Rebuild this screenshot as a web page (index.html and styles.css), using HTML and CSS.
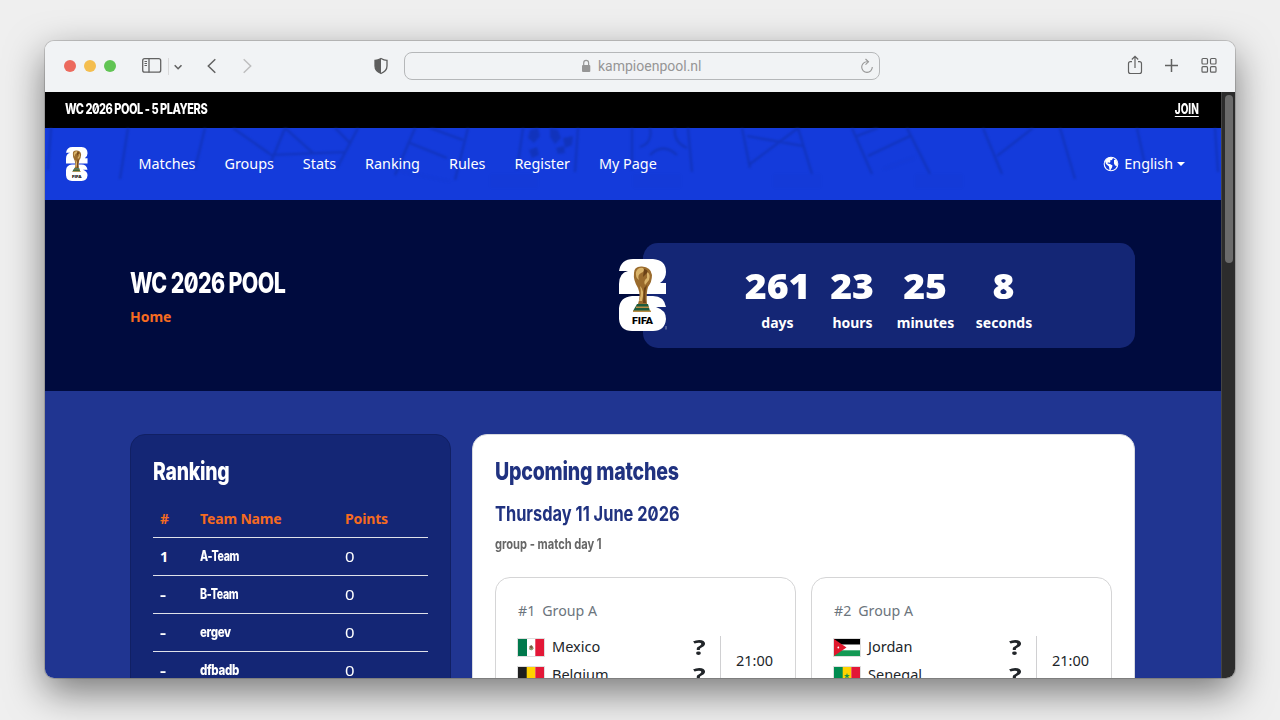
FILE: index.html
```html
<!DOCTYPE html>
<html lang="en">
<head>
<meta charset="utf-8">
<title>WC 2026 Pool</title>
<link rel="stylesheet" href="styles.css">
</head>
<body>
<svg class="defs" aria-hidden="true">
  <symbol id="cup" viewBox="0 0 48 72">
    <path fill="#fff" d="M0 12Q2 0 14 0H34Q47 1 47 13Q47 20 41 24L47 24V35H0V25Q0 14 9 12Z"/>
    <path fill="#fff" d="M13 37H34Q45 37 47 48H37Q47 51 47 60Q46 72 34 72H13Q1 72 0 60V49Q1 38 13 37Z"/>
    <path fill="#9a6b2d" d="M15 14Q15 7 23 7.500Q32 8 33 16Q33 23 29 28Q27 34 28 45H19Q22 36 19 29Q14 21 15 14Z"/>
    <path fill="#d9b36a" d="M17 13Q19 8 24 9Q27 12 22 14Q18 16 20 21Q16 18 17 13ZM28 13Q32 15 30 21L26 26Q24 22 28 19ZM21 27Q26 31 23 42H20Q23 35 21 27Z"/>
    <path fill="#6b4217" d="M25 10Q30 11 28 14L24 18ZM25 29L28 26Q25 35 27 44H24Z"/>
    <path fill="#1b5a3c" d="M18 45H29L31 52H14Z"/>
    <path fill="#b98c42" d="M17 47.500H30V49H17ZM14 51.500H32V53H14Z"/>
  </symbol>
</svg>
<div class="window">
  <div class="toolbar">
    <div class="lights"><i class="red"></i><i class="yellow"></i><i class="green"></i></div>
    <svg class="nav-icons" width="130" height="24" viewBox="0 0 130 24" fill="none" stroke="#626262" stroke-width="1.300">
      <rect x="4.700" y="4.700" width="18" height="13.500" rx="2"/><path d="M11 4.500v14"/><path stroke-width="1" d="M6.500 7.500h2.500M6.500 9.500h2.500M6.500 11.500h2.500"/>
      <path stroke="#d9d9da" stroke-width="1" d="M30.500 4v17"/>
      <path stroke-width="1.600" d="M36.700 11.300l3.400 3.400 3.400-3.400"/>
      <path stroke-width="1.500" d="M77.300 5.200l-7 6.800 7 6.800"/><path stroke="#bebebf" stroke-width="1.500" d="M105.700 5.200l7 6.800-7 6.800"/>
    </svg>
    <svg class="shield" width="16" height="18" viewBox="0 0 16 18"><path fill="none" stroke="#5e5e5e" stroke-width="1.300" d="M8 1.500Q11 3.300 14 3.300V9Q14 14 8 16.500Q2 14 2 9V3.300Q5 3.300 8 1.500Z"/><path fill="#5e5e5e" d="M8 1.500V16.500Q2 14 2 9V3.300Q5 3.300 8 1.500Z"/></svg>
    <div class="address">
      <svg class="lock" width="10" height="14" viewBox="0 0 10 14"><rect x="1" y="6" width="8.300" height="7" rx="1" fill="#969696"/><path d="M2.700 6V4Q2.700 1.300 5.150 1.300T7.600 4V6" fill="none" stroke="#969696" stroke-width="1.200"/></svg>
      <span class="url">kampioenpool.nl</span>
      <svg class="reload" width="14" height="16" viewBox="0 0 14 16" fill="none" stroke="#969696" stroke-width="1.100"><path d="M8.200 3.800H7A5.300 5.300 0 1 0 12.300 9.100"/><path d="M5.500 1l3 2.800-3 2.900"/></svg>
    </div>
    <svg class="actions" width="92" height="24" viewBox="0 0 92 24" fill="none" stroke="#626262" stroke-width="1.200">
      <path d="M5 7.700H3.500Q1.500 7.700 1.500 9.700V17.500Q1.500 19.500 3.500 19.500H12.500Q14.500 19.500 14.500 17.500V9.700Q14.500 7.700 12.500 7.700H11M8 14V2.500M4.800 5.500L8 2.300l3.200 3.200"/>
      <path stroke-width="1.500" d="M38 11.500H51M44.500 5V18"/>
      <rect x="75" y="4.500" width="5.500" height="5.500" rx="1"/><rect x="83.500" y="4.500" width="5.500" height="5.500" rx="1"/><rect x="75" y="12.700" width="5.500" height="5.500" rx="1"/><rect x="83.500" y="12.700" width="5.500" height="5.500" rx="1"/>
    </svg>
  </div>
  <div class="viewport">
    <div class="page">
      <div class="topbar"><span class="display pool-name">WC 2026 POOL - 5 PLAYERS</span><a class="display join">JOIN</a></div>
      <nav class="nav">
        <svg class="pattern" width="1176" height="72" viewBox="45 128 1176 72" fill="none">
          <path d="M51 128L48 170M128 128L120 179M205 128L195 169M233 128L270 154M285 128L271 162M285 128L313 153M270 155L345 152M335 128L351 144M358 128L337 168M415 128L395 175M410 143L447 158M430 128L463 140M468 128L455 180M523 128L517 170M578 128L575 172M632 128V170M688 128L692 172M650 128Q653 143 640 147M675 128Q673 142 687 148M650 155Q663 142 677 155M742 128L750 168M747 136L803 146M798 128L750 164M798 128L812 174M852 128L872 174M907 128L930 174M857 136L878 128M868 156L910 136M983 128L1002 174M1060 128L1075 179M1033 128L997 156M1137 128L1147 174M1215 128L1218 172"/>
          <path class="blots" d="M530 130l8-2 2 8-6 7-6-5ZM550 128l8 2 3 8-6 6-5-7ZM563 138l10-2-1 9-7 3ZM529 150l8-3 2 8-7 3ZM556 148l8-2 1 7-7 1Z"/>
          <path class="blots faint" d="M490 174h48v14h-48ZM633 174h48v14h-48ZM773 174h48v14h-48ZM915 174h48v14h-48ZM395 168L450 180V183L395 172ZM883 167L915 155V160L883 171Z"/>
        </svg>
        <svg class="nav-logo" width="22" height="34" viewBox="0 0 48 72" preserveAspectRatio="none"><use href="#cup"/><text x="13" y="65" class="cup-text" textLength="21" lengthAdjust="spacingAndGlyphs">FIFA</text></svg>
        <div class="links"><a>Matches</a><a>Groups</a><a>Stats</a><a>Ranking</a><a>Rules</a><a>Register</a><a>My Page</a></div>
        <div class="lang">
          <svg width="16" height="16" viewBox="0 0 16 16"><circle cx="8" cy="8" r="6.800" fill="none" stroke="#fff" stroke-width="1.100"/><path fill="#fff" d="M2 5Q4 1.500 8 1.200L10 2 9 4 7 4.500 7.500 6 6 7 5 6 4.500 7.500 7 8 9.500 9.500 9 11.500 7.500 14 6.500 14 6 10.500 3 8ZM11 4l2-.500L14.500 7 14 10 12 9.500 11 7.500Z"/></svg>
          <span>English</span><i class="caret"></i>
        </div>
      </nav>
      <header class="hero">
        <div class="hero-title"><h1 class="display">WC 2026 POOL</h1><a class="home">Home</a></div>
        <div class="countdown">
          <svg class="big-logo" width="48" height="72" viewBox="0 0 48 72"><use href="#cup"/><text x="13" y="65" class="cup-text" textLength="21" lengthAdjust="spacingAndGlyphs">FIFA</text><path d="M47 67v3.500" stroke="#8d95bd" stroke-width="1"/></svg>
          <div class="unit days"><b>261</b><span>days</span></div>
          <div class="unit hours"><b>23</b><span>hours</span></div>
          <div class="unit minutes"><b>25</b><span>minutes</span></div>
          <div class="unit seconds"><b>8</b><span>seconds</span></div>
        </div>
      </header>
      <main class="content">
        <section class="ranking">
          <h2 class="display">Ranking</h2>
          <div class="row head"><span>#</span><span>Team Name</span><span>Points</span></div>
          <div class="row"><b>1</b><span class="display team">A-Team</span><span class="points">0</span></div>
          <div class="row"><b class="dash">-</b><span class="display team">B-Team</span><span class="points">0</span></div>
          <div class="row"><b class="dash">-</b><span class="display team lower">ergev</span><span class="points">0</span></div>
          <div class="row"><b class="dash">-</b><span class="display team lower">dfbadb</span><span class="points">0</span></div>
        </section>
        <section class="upcoming">
          <h2 class="display">Upcoming matches</h2>
          <h3 class="display">Thursday 11 June 2026</h3>
          <p class="display">group - match day 1</p>
          <div class="matches">
            <article class="match">
              <div class="group"><span>#1</span><span>Group A</span></div>
              <div class="fixture">
                <div class="teams">
                  <div class="side"><svg class="flag" width="26" height="17" viewBox="0 0 26 17"><path fill="#fff" d="M0 0h26v17H0z"/><path fill="#00794c" d="M0 0h9v17H0z"/><path fill="#e31837" d="M17.300 0H26v17h-8.700z"/><circle cx="13.200" cy="8.700" r="2.200" fill="#b9a183"/><path d="M11.500 7.500l2-1.500 1.500 3-2 1z" fill="#775c43"/><path d="M11 9.500q2 3 4.500 0" stroke="#73a06e" fill="none"/></svg><span>Mexico</span><b>?</b></div>
                  <div class="side"><svg class="flag" width="26" height="17" viewBox="0 0 26 17"><path fill="#1e1e1e" d="M0 0h9v17H0z"/><path fill="#ffd200" d="M8.700 0h8.600v17H8.700z"/><path fill="#e31837" d="M17.300 0H26v17h-8.700z"/></svg><span>Belgium</span><b>?</b></div>
                </div>
                <div class="time">21:00</div>
              </div>
            </article>
            <article class="match">
              <div class="group"><span>#2</span><span>Group A</span></div>
              <div class="fixture">
                <div class="teams">
                  <div class="side"><svg class="flag" width="26" height="17" viewBox="0 0 26 17"><path fill="#fff" d="M0 0h26v17H0z"/><path d="M0 0h26v5.500H0z"/><path fill="#149954" d="M0 11.300h26V17H0z"/><path fill="#e0182d" d="M0 0l12.500 8.500L0 17z"/><circle cx="4.300" cy="8.500" r=".9" fill="#fff"/></svg><span>Jordan</span><b>?</b></div>
                  <div class="side"><svg class="flag" width="26" height="17" viewBox="0 0 26 17"><path fill="#008c50" d="M0 0h9v17H0z"/><path fill="#ffd200" d="M8.700 0h8.600v17H8.700z"/><path fill="#e31837" d="M17.300 0H26v17h-8.700z"/><path fill="#17904d" d="M13 6l.7 2H16l-1.800 1.300.7 2.200-1.900-1.300-1.900 1.300.7-2.200L10 8h2.300z"/></svg><span>Senegal</span><b>?</b></div>
                </div>
                <div class="time">21:00</div>
              </div>
            </article>
          </div>
        </section>
      </main>
    </div>
    <div class="scrollbar"><div class="thumb"></div></div>
  </div>
</div>
</body>
</html>
```
FILE: styles.css
```css
* { box-sizing: border-box; }
body { margin: 0; height: 720px; overflow: hidden; background: #efefef; padding: 41px 45px 42px; font: 14.500px/20px "Noto Sans", sans-serif; color: #fff; }
h1, h2, h3, p { margin: 0; }
svg { display: block; flex: none; }
.defs { position: absolute; width: 0; height: 0; }
.window { width: 1190px; height: 637px; border-radius: 9px; overflow: hidden; display: flex; flex-direction: column; box-shadow: 0 0 0 1px rgba(0,0,0,.15), 0 14px 38px rgba(0,0,0,.5); }
.toolbar { height: 51px; flex: none; background: #f1f3f5; display: flex; align-items: center; padding: 0 16px 2px 19px; }
.lights { display: flex; gap: 8px; margin-top: 1px; }
.lights i { width: 12px; height: 12px; border-radius: 50%; }
.red { background: #ec6a5e; } .yellow { background: #f4be4f; } .green { background: #61c454; }
.nav-icons { margin-left: 22px; }
.shield { margin-left: 105px; margin-top: 1px; }
.address { margin-left: 15px; width: 476px; height: 28px; border: 1px solid #b5b7b9; border-radius: 8px; display: flex; align-items: center; padding: 0 5px 0 176px; color: #969696; }
.url { margin-left: 7px; font: 14px/20px Roboto, sans-serif; }
.reload { margin-left: auto; }
.actions { margin-left: auto; }
.viewport { flex: 1; min-height: 0; display: flex; }
.page { width: 1176px; overflow: hidden; background: #203591; }
.scrollbar { flex: 1; background: #2c2c2c; border-left: 1px solid #444; padding: 3px 2px 0 3px; }
.thumb { width: 8px; height: 168px; border-radius: 4px; background: #6b6b6b; }
.display { font-family: Inter, sans-serif; font-weight: 800; font-feature-settings: "zero"; display: block; width: max-content; white-space: nowrap; transform-origin: 0 50%; transform: scaleX(.75); }
.topbar { height: 36px; background: #000; display: flex; justify-content: space-between; padding: 7px 22px 0 20px; font-size: 14px; }
.pool-name { letter-spacing: -.6px; transform: scaleX(.785); }
.join { text-decoration: underline; text-underline-offset: 2px; transform-origin: 100% 50%; transform: scaleX(.71); }
.nav { height: 72px; background: #143bdb; display: flex; align-items: center; position: relative; padding: 0 36px 0 21px; }
.pattern { position: absolute; left: 0; top: 0; stroke: #102fa9; stroke-width: 2.200; opacity: .6; filter: blur(.9px); }
.blots { fill: #102fa9; stroke: none; } .faint { opacity: .1; }
.nav-logo, .links, .lang { position: relative; }
.links { display: flex; gap: 29px; margin: 0 0 0 50.500px; font-size: 14.400px; letter-spacing: -.02px; font-weight: 450; }
.lang { margin: 0 0 0 auto; display: flex; align-items: center; gap: 5px; font-size: 14.300px; font-weight: 450; }
.caret { border: 4px solid transparent; border-top-color: #fff; border-bottom: 0; margin-left: -1px; }
.cup-text { font: 900 9px Roboto, sans-serif; fill: #000; }
.hero { height: 191px; background: #000b3e; display: flex; justify-content: space-between; padding: 43px 86px 0 85px; }
.hero h1 { font-size: 28.500px; line-height: 36px; margin-top: 22px; letter-spacing: -.8px; transform: scaleX(.75); }
.home { display: block; margin-top: 6px; font-size: 14px; font-weight: 700; color: #f66b21; }
.countdown { width: 492px; height: 105px; border-radius: 15px; background: #142675; position: relative; display: flex; padding: 25px 0 0 102px; }
.big-logo { position: absolute; left: -24px; top: 16px; }
.unit { display: flex; flex-direction: column; align-items: center; font-weight: 700; font-size: 14px; }
.unit b { font-size: 36px; line-height: 36px; transform: scaleX(1.040); }
.unit span { margin-top: 9px; }
.days { width: 65px; } .hours { width: 45px; margin-left: 20px; } .minutes { width: 57px; margin-left: 22px; } .seconds { width: 58px; margin-left: 21px; }
.content { display: flex; gap: 21px; padding: 43px 86px 0 85px; align-items: flex-start; }
.ranking { width: 321px; height: 320px; border: 1px solid #112064; border-radius: 15px; background: #142675; padding: 20px 22px; }
h2.display { font-size: 25px; line-height: 32px; letter-spacing: -.3px; transform: scaleX(.775); }
.row { display: grid; grid-template-columns: 40px 145px 1fr; height: 38px; padding: 8px 7px 0; border-bottom: 1px solid #dfe1e9; }
.head { margin-top: 13px; padding-top: 9px; color: #f66b21; font-weight: 700; font-size: 14px; letter-spacing: -.15px; }
.row .team { font-size: 14px; letter-spacing: -.4px; transform: scaleX(.76); }
.row .lower { transform: scaleX(.82); }
.points { width: max-content; transform: scaleX(1.150); transform-origin: 0 50%; }
.dash { transform: scaleX(1.300); transform-origin: 0 50%; }
.upcoming { width: 663px; height: 330px; border: 1px solid #d8dae0; border-radius: 15px; background: #fff; color: #203280; padding: 20px 22px; }
.upcoming h2.display { transform: scaleX(.783); }
.upcoming h3 { font-size: 20.500px; line-height: 28px; margin-top: 13px; font-weight: 700; transform: scaleX(.8); }
.upcoming p { font-size: 14px; margin-top: 6px; color: #666; font-weight: 700; transform: scaleX(.795); }
.matches { display: grid; grid-template-columns: 301px 301px; gap: 15px; margin-top: 23px; color: #212529; }
.match { height: 160px; border: 1px solid #d5d5d6; border-radius: 15px; padding: 23px 22px; }
.group { display: flex; gap: 7px; color: #6c757d; font-size: 14.200px; }
.fixture { display: flex; margin-top: 15px; height: 51px; }
.teams { width: 205px; border-right: 1px solid #d0d0d2; }
.side { display: flex; align-items: center; height: 23px; margin-bottom: 5px; }
.flag { outline: 1px solid #dedede; outline-offset: -.5px; margin-top: -1px; }
.side span { margin-left: 8px; margin-top: -3px; }
.side b { margin: -3px 15px 0 auto; font-size: 22px; transform: scaleX(1.200); }
.time { margin: 14px 0 0 15px; }
```
